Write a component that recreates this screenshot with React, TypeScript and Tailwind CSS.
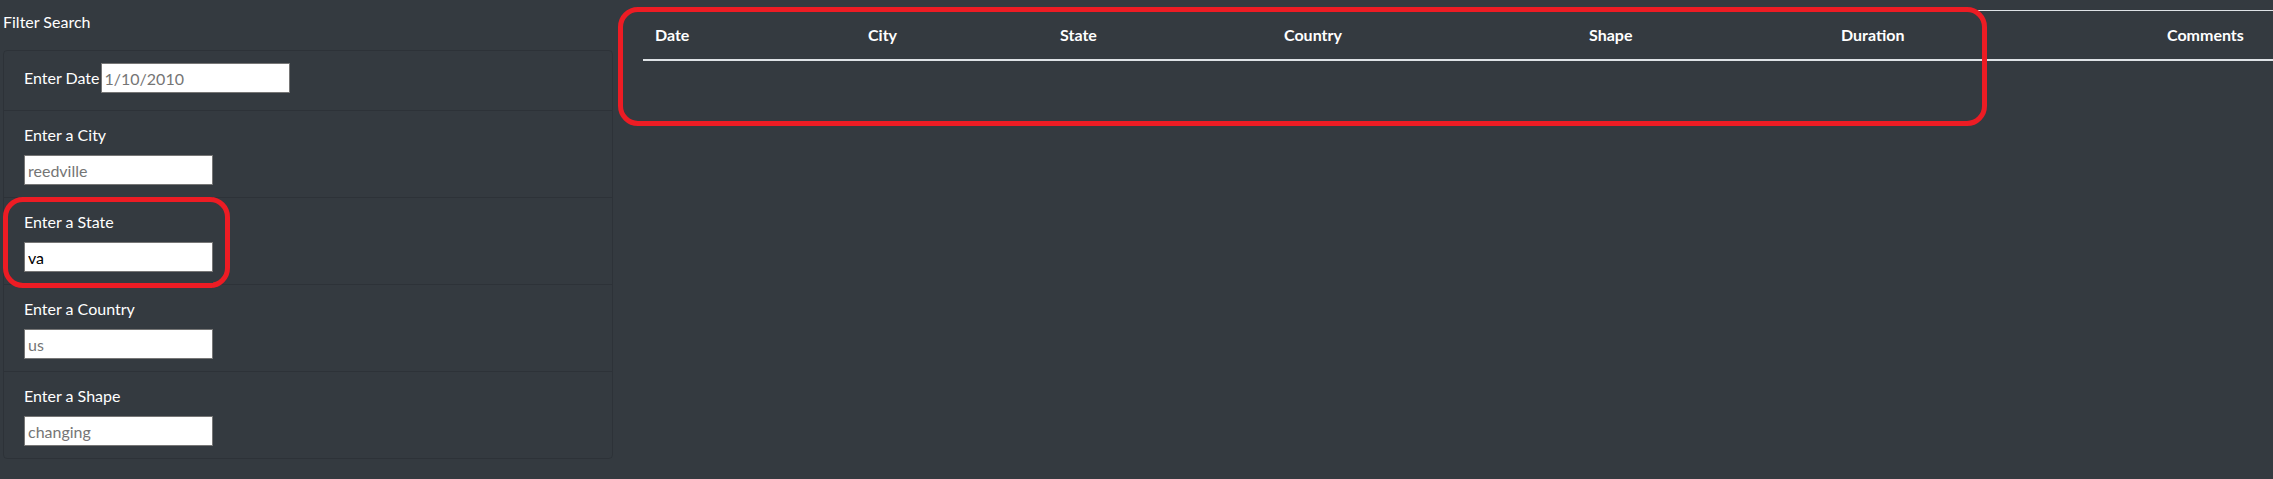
import React from 'react';

const filters = [
  { label: 'Enter a City', placeholder: 'reedville' },
  { label: 'Enter a State', value: 'va' },
  { label: 'Enter a Country', placeholder: 'us' },
  { label: 'Enter a Shape', placeholder: 'changing' },
];

const columns = [
  { name: 'Date', width: 'w-[213px]' },
  { name: 'City', width: 'w-[192px]' },
  { name: 'State', width: 'w-[224px]' },
  { name: 'Country', width: 'w-[305px]' },
  { name: 'Shape', width: 'w-[252px]' },
  { name: 'Duration', width: 'w-[326px]' },
  { name: 'Comments', width: 'w-[118px]' },
];

const inputClass =
  'w-[189px] h-[30px] bg-white border border-[#767676] px-[3px] text-base leading-6 text-black placeholder:text-[#757575] outline-none';

export default function App() {
  return (
    <div className="relative min-h-screen overflow-hidden bg-[#343a40] text-white font-['Lato',sans-serif] text-base leading-6">
      <div className="flex">
        {/* Filters */}
        <aside className="ml-[3px] w-[610px] shrink-0">
          <div className="pt-[10px] mb-4">Filter Search</div>
          <ul className="rounded border border-[rgba(0,0,0,0.125)]">
            <li className="flex items-center px-5 pt-3 pb-[17px]">
              <label className="mr-px">Enter Date</label>
              <input className={inputClass} placeholder="1/10/2010" />
            </li>
            {filters.map((f) => (
              <li key={f.label} className="border-t border-[rgba(0,0,0,0.125)] px-5 py-3">
                <label className="block mb-2">{f.label}</label>
                <input
                  className={inputClass}
                  placeholder={f.placeholder}
                  defaultValue={f.value}
                />
              </li>
            ))}
          </ul>
        </aside>

        {/* Results table */}
        <main className="ml-[30px] pt-[10px]">
          <table className="table-fixed w-[1630px] border-collapse">
            <thead>
              <tr>
                {columns.map((c) => (
                  <th
                    key={c.name}
                    className={`${c.width} text-left font-bold px-3 py-3 border-t border-[#dee2e6] border-b-2 border-b-[#dee2e6]`}
                  >
                    {c.name}
                  </th>
                ))}
              </tr>
            </thead>
            <tbody></tbody>
          </table>
        </main>
      </div>

      {/* red annotation outlines */}
      <div className="pointer-events-none absolute left-[3px] top-[197px] w-[227px] h-[91px] rounded-[20px] border-[5px] border-[#ed1c24]"></div>
      <div className="pointer-events-none absolute left-[618px] top-[7px] w-[1369px] h-[119px] rounded-[20px] border-[5px] border-[#ed1c24]"></div>
    </div>
  );
}
